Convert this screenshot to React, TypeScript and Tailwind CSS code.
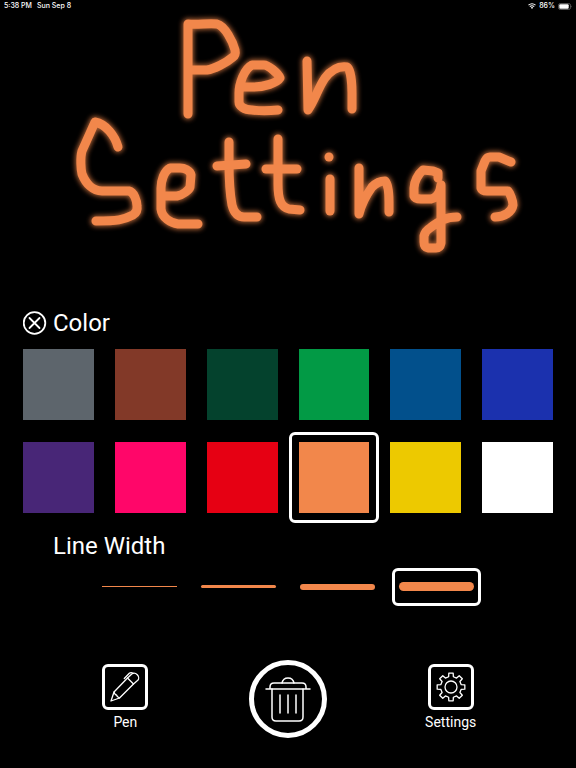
import React, { useState } from 'react';

const COLORS = [
  { name: 'Gray', className: 'bg-[#5d656c]' },
  { name: 'Brown', className: 'bg-[#823928]' },
  { name: 'Dark green', className: 'bg-[#04422d]' },
  { name: 'Green', className: 'bg-[#029a45]' },
  { name: 'Blue', className: 'bg-[#02508c]' },
  { name: 'Royal blue', className: 'bg-[#1b31ae]' },
  { name: 'Purple', className: 'bg-[#482677]' },
  { name: 'Pink', className: 'bg-[#ff0669]' },
  { name: 'Red', className: 'bg-[#e60013]' },
  { name: 'Orange', className: 'bg-[#f2874b]' },
  { name: 'Yellow', className: 'bg-[#edc900]' },
  { name: 'White', className: 'bg-white' },
];

const LINE_WIDTHS = [
  { name: 'Thin', className: 'h-px' },
  { name: 'Medium', className: 'h-[3px] rounded-full' },
  { name: 'Thick', className: 'h-[6px] rounded-full' },
  { name: 'Extra thick', className: 'h-[9px] rounded-full' },
];

// Freehand pen strokes on the drawing canvas
const STROKES = [
  'M188 114V24C198 25 208 23 217 24C225 26 233 42 235 50Q236 55 233 57C226 63 214 69 207 70H190',
  'M240 87H254C264 87 277 83 280 78C278 73 268 65 264 65H252C244 69 239 84 239 93V102C239 106 244 110 252 110C260 111 268 111 278 110',
  'M307 61L308 110C315 100 318 88 325 78C332 69 340 66 347 67C351 69 352 85 352 93V109',
  'M118 147C115 136 106 124 95 122L82 151C80 158 81 170 82 174C86 184 93 191 102 191H129C134 192 137 201 137 206Q138 212 133 215C123 220 118 221 96 221',
  'M165 196H177C183 195 189 190 190 187L191 175C190 170 184 168 180 168H170C164 171 161 181 161 188V209C162 218 171 223 178 224H198',
  'M229 142V163C229 179 230 194 232 205C234 213 238 217 244 217H257',
  'M217 166L246 164',
  'M278 139V184C278 200 281 207 289 209L300 210',
  'M266 169H297',
  'M329 157H329',
  'M330 179V211',
  'M359 168V214C362 202 367 194 372 187C377 182 381 181 385 181C388 184 389 193 389 202V212',
  'M438 178L438 173L433 171L423 170C418 174 414 182 414 188V196Q415 199 421 199H431Q437 198 440 190L441 185V243Q440 248 436 248H428Q424 247 424 242V236Q425 231 430 228C439 221 446 217 457 217',
  'M511 162L499 157H490Q487 157 485 161L481 171V188Q482 191 487 191H508C510 193 513 201 513 205C512 212 504 217 495 217',
];

const gearPath = () => {
  const points: string[] = [];
  for (let i = 0; i < 8; i++) {
    const steps: [number, number][] = [
      [-13, 10.5],
      [-9, 14],
      [9, 14],
      [13, 10.5],
    ];
    steps.forEach(([offset, radius]) => {
      const angle = ((i * 45 + offset) * Math.PI) / 180;
      const x = 20 + radius * Math.sin(angle);
      const y = 20 - radius * Math.cos(angle);
      points.push(`${x.toFixed(2)} ${y.toFixed(2)}`);
    });
  }
  return `M${points.join('L')}Z`;
};

const StatusBar: React.FC = () => (
  <header className="flex h-3 items-center justify-between px-1 font-['Inter',sans-serif] text-[7px] leading-3 font-medium">
    <div className="flex gap-[5px]">
      <span>5:38 PM</span>
      <span>Sun Sep 8</span>
    </div>
    <div className="flex items-center gap-[3px]">
      <svg width="8" height="6" viewBox="0 0 8 6" fill="none" stroke="white" aria-hidden="true">
        <path d="M.5 2.2Q4-.8 7.5 2.2M1.8 3.6Q4 1.8 6.2 3.6" strokeWidth="1.1" />
        <path d="M2.8 4.6Q4 3.6 5.2 4.6L4 5.9Z" fill="white" stroke="none" />
      </svg>
      <span>86%</span>
      <svg width="14" height="7" viewBox="0 0 14 7" fill="none" aria-hidden="true">
        <rect x=".5" y=".5" width="12" height="6" rx="1.8" stroke="#777" strokeWidth=".7" />
        <rect x="1.3" y="1.3" width="9.4" height="4.4" rx="1" fill="white" />
        <path d="M13.2 2.4Q14.2 3.5 13.2 4.6Z" fill="#777" />
      </svg>
    </div>
  </header>
);

const Canvas: React.FC = () => (
  <svg
    viewBox="0 12 576 295"
    className="block w-full"
    fill="none"
    strokeLinecap="round"
    strokeLinejoin="round"
    role="img"
    aria-label="Pen Settings"
  >
    <defs>
      <filter id="glow" x="0" y="0" width="576" height="307" filterUnits="userSpaceOnUse">
        <feGaussianBlur stdDeviation="2.5" />
      </filter>
    </defs>
    <g stroke="#f2874b" strokeWidth="11" opacity="0.75" filter="url(#glow)">
      {STROKES.map((d) => (
        <path key={d} d={d} />
      ))}
    </g>
    <g stroke="#f2874b" strokeWidth="9">
      {STROKES.map((d) => (
        <path key={d} d={d} />
      ))}
    </g>
  </svg>
);

const App: React.FC = () => {
  const [color, setColor] = useState('Orange');
  const [lineWidth, setLineWidth] = useState('Extra thick');

  return (
    <div className="min-h-screen bg-black font-['Roboto','Liberation_Sans',sans-serif] text-white">
      <StatusBar />
      <Canvas />

      <main className="px-[23px]">
        <section>
          <div className="flex h-8 items-center gap-[6px]">
            <button type="button" aria-label="Close">
              <svg className="block size-6" viewBox="0 0 24 24" fill="none" stroke="white" strokeWidth="1.8">
                <circle cx="11.5" cy="12" r="10.8" />
                <path d="M6.5 7L16.5 17M16.5 7L6.5 17" strokeLinecap="round" />
              </svg>
            </button>
            <h2 className="text-2xl">Color</h2>
          </div>
          <div className="mt-[10px] grid grid-cols-6 gap-x-[21px] gap-y-[22px]">
            {COLORS.map((item) => (
              <button
                key={item.name}
                type="button"
                aria-label={item.name}
                aria-pressed={color === item.name}
                onClick={() => setColor(item.name)}
                className={`relative aspect-square ${item.className}`}
              >
                {color === item.name && (
                  <span className="absolute -inset-[10px] rounded-[6px] border-3 border-white" />
                )}
              </button>
            ))}
          </div>
        </section>

        <section className="mt-[17px]">
          <h2 className="pl-[30px] text-2xl">Line Width</h2>
          <div className="mt-[6px] flex justify-center gap-[10px]">
            {LINE_WIDTHS.map((item) => (
              <button
                key={item.name}
                type="button"
                aria-label={item.name}
                aria-pressed={lineWidth === item.name}
                onClick={() => setLineWidth(item.name)}
                className={`flex h-[38px] w-[89px] items-center rounded-[6px] border-3 px-1 ${
                  lineWidth === item.name ? 'border-white' : 'border-transparent'
                }`}
              >
                <span className={`w-full bg-[#f2874b] ${item.className}`} />
              </button>
            ))}
          </div>
        </section>
      </main>

      <nav className="mt-[54px] grid grid-cols-3 justify-items-center px-11">
        <button type="button" className="flex flex-col items-center gap-1 pt-1 text-sm leading-4">
          <span className="size-[46px] rounded-[6px] border-3 border-white">
            <svg className="block size-10" viewBox="0 0 40 40" fill="none" stroke="white" strokeWidth="1.3" strokeLinejoin="round" strokeLinecap="round" aria-hidden="true">
              <path d="M9 25L22.5 11L26.5 7.2C28 6 30.5 6 32.3 7.8C34 9.5 34 12 32.8 13.3L28.5 17L14.5 31L6 34Z" />
              <path d="M22.5 11L28.5 17M9 25Q10 28 11.5 28Q12 30 14.5 31" />
              <path d="M19.3 11.5L24.3 6.3Q26 5 28 6.3" />
            </svg>
          </span>
          <span>Pen</span>
        </button>
        <button
          type="button"
          aria-label="Clear"
          className="size-[78px] rounded-full border-5 border-white"
        >
          <svg className="block size-[68px]" viewBox="0 0 68 68" fill="none" stroke="white" strokeWidth="1.5" strokeLinecap="round" aria-hidden="true">
            <path d="M12 24H56M16 24V22Q16 18 20 18H48Q52 18 52 22V24" />
            <path d="M28 18Q29 13 34 13Q39 13 40 18" />
            <path d="M18 24V52Q18 56 22 56H45Q49 56 49 52V24" />
            <path d="M26 30V48M34 30V48M42 30V48" />
          </svg>
        </button>
        <button type="button" className="flex flex-col items-center gap-1 pt-1 text-sm leading-4">
          <span className="size-[46px] rounded-[6px] border-3 border-white">
            <svg className="block size-10" viewBox="0 0 40 40" fill="none" stroke="white" strokeWidth="1.3" strokeLinejoin="round" aria-hidden="true">
              <path d={gearPath()} />
              <circle cx="20" cy="20" r="6" />
            </svg>
          </span>
          <span>Settings</span>
        </button>
      </nav>
    </div>
  );
};

export default App;
